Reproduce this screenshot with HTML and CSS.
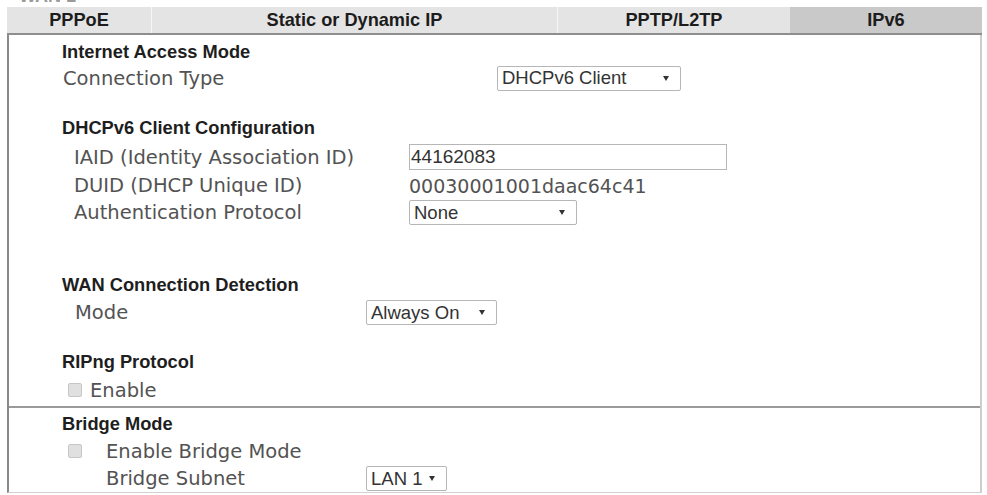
FILE: index.html
```html
<!DOCTYPE html>
<html>
<head>
<meta charset="utf-8">
<title>IPv6</title>
<link rel="stylesheet" href="styles.css">
</head>
<body>
<div class="page">
  <div class="caption"><span>WAN 1</span></div>
  <div class="tabs">
    <div class="tab">PPPoE</div>
    <div class="tab sep">Static or Dynamic IP</div>
    <div class="tab sep">PPTP/L2TP</div>
    <div class="tab active">IPv6</div>
  </div>
  <div class="panel">
    <div class="section main">
      <div class="head">Internet Access Mode</div>
      <div class="row r-conn">
        <span class="label l-conn">Connection Type</span>
        <div class="select w-dhcp"><span>DHCPv6 Client</span><i class="arrow"></i></div>
      </div>

      <div class="head gap-dhcp">DHCPv6 Client Configuration</div>
      <div class="row r-cfg r-iaid">
        <span class="label l-cfg">IAID (Identity Association ID)</span>
        <div class="input">44162083</div>
      </div>
      <div class="row r-cfg r-std">
        <span class="label l-cfg">DUID (DHCP Unique ID)</span>
        <span class="value">00030001001daac64c41</span>
      </div>
      <div class="row r-cfg r-std">
        <span class="label l-cfg">Authentication Protocol</span>
        <div class="select w-none"><span>None</span><i class="arrow"></i></div>
      </div>

      <div class="head gap-wan">WAN Connection Detection</div>
      <div class="row r-mode">
        <span class="label l-mode">Mode</span>
        <div class="select w-always"><span>Always On</span><i class="arrow"></i></div>
      </div>

      <div class="head gap-rip">RIPng Protocol</div>
      <div class="row r-enable">
        <span class="check"></span><span class="label">Enable</span>
      </div>
    </div>

    <div class="section bridge">
      <div class="head">Bridge Mode</div>
      <div class="row r-benable">
        <span class="check wide"></span><span class="label">Enable Bridge Mode</span>
      </div>
      <div class="row r-subnet">
        <span class="label l-subnet">Bridge Subnet</span>
        <div class="select w-lan"><span>LAN 1</span><i class="arrow"></i></div>
      </div>
    </div>
  </div>
</div>
</body>
</html>
```

FILE: styles.css
```css
html, body {
  margin: 0;
  padding: 0;
  background: #ffffff;
}

body {
  font-family: "DejaVu Sans", Verdana, sans-serif;
  color: #535353;
}

.page {
  padding-left: 7px;
  width: 975px;
}

.caption {
  height: 7px;
  overflow: hidden;
  padding-left: 12px;
}

.caption span {
  display: block;
  margin-top: -13px;
  font: bold 18px/18px "Liberation Sans", Arial, sans-serif;
  color: #9a9a9a;
}

.tabs {
  display: grid;
  grid-template-columns: 144px 406px 233px 192px;
  height: 26px;
  background: #e4e4e4;
  border-bottom: 2px solid #8e8e8e;
}

.tab {
  display: flex;
  align-items: center;
  justify-content: center;
  font: bold 18.2px "Liberation Sans", Arial, sans-serif;
  color: #1c1c1c;
}

.tab.sep {
  border-left: 1px solid #f6f6f6;
}

.tab.active {
  background: #c9c9c9;
}

.panel {
  border-left: 2px solid #8a8a8a;
  border-right: 2px solid #cdcdcd;
  border-bottom: 1px solid #d2d2d2;
}

.section.main {
  padding-top: 4px;
  padding-bottom: 1px;
}

.section.bridge {
  border-top: 2px solid #9a9a9a;
  padding-top: 3px;
}

.head {
  height: 26px;
  display: flex;
  align-items: center;
  padding-left: 53px;
  font: bold 18.3px "Liberation Sans", Arial, sans-serif;
  color: #1e1e1e;
}

.gap-dhcp { margin-top: 24px; }
.gap-wan { margin-top: 46px; }
.gap-rip { margin-top: 22px; }

.row {
  display: flex;
  align-items: center;
  font-size: 19px;
}

.label {
  font-size: 19.5px;
  color: #535353;
  white-space: nowrap;
}

.value {
  color: #535353;
}

.r-conn {
  height: 26px;
  padding-left: 54px;
}
.l-conn { width: 434px; }

.r-cfg { padding-left: 65px; }
.r-iaid { height: 30px; margin-top: 1px; }
.r-std { height: 27px; }
.l-cfg { width: 335px; }

.r-mode {
  height: 29px;
  padding-left: 66px;
}
.l-mode { width: 291px; }

.r-enable {
  height: 30px;
  padding-left: 59px;
}

.r-benable {
  height: 28px;
  padding-left: 59px;
}

.r-subnet {
  height: 27px;
  padding-left: 97px;
}
.l-subnet { width: 260px; }

.check {
  box-sizing: border-box;
  width: 14px;
  height: 14px;
  border: 1px solid #c6c6c6;
  border-radius: 2px;
  background: #e0e0e0;
  margin-right: 8px;
}

.check.wide {
  margin-right: 24px;
}

.select {
  box-sizing: border-box;
  display: flex;
  align-items: center;
  justify-content: space-between;
  height: 25px;
  padding: 0 11px 0 4px;
  border: 1px solid #b6b6b6;
  border-radius: 2px;
  background: #ffffff;
  font: 18.5px "Liberation Sans", Arial, sans-serif;
  color: #333333;
}

.w-dhcp { width: 184px; }
.w-none { width: 168px; }
.w-always { width: 131px; }
.w-lan { width: 81px; }

.arrow {
  width: 0;
  height: 0;
  border-left: 3.5px solid transparent;
  border-right: 3.5px solid transparent;
  border-top: 5px solid #333333;
}

.input {
  box-sizing: border-box;
  display: flex;
  align-items: center;
  width: 318px;
  height: 26px;
  padding-left: 1px;
  border: 1px solid #b6b6b6;
  background: #ffffff;
  font: 19px "Liberation Sans", Arial, sans-serif;
  color: #333333;
}
```
